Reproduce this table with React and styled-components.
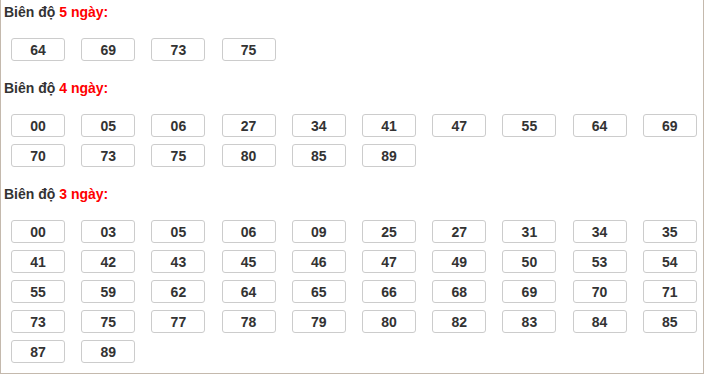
import styled, { createGlobalStyle } from 'styled-components';

const GlobalStyle = createGlobalStyle`
body {
  margin: 0;
  background: #fff;
  font-family: "Liberation Sans", Arial, sans-serif;
}
`

const Panel = styled.div`
width: 704px;
height: 374px;
box-sizing: border-box;
border: 1px solid #c4b9ad;
border-top: none;
background: #fff;
overflow: hidden;
`

const Section = styled.div`
padding-bottom: ${props => props.$gap}px;
`

const Title = styled.div`
height: 24px;
line-height: 24px;
padding-left: 3px;
font-size: 14px;
font-weight: bold;
color: #333;
margin-bottom: 14px;
`

const Red = styled.span`
color: #f00;
`

const Grid = styled.div`
display: grid;
grid-template-columns: repeat(10, 1fr);
row-gap: 7px;
`

const Cell = styled.div`
width: 54px;
height: 23px;
margin-left: 10px;
box-sizing: border-box;
border: 1px solid #ccc;
border-radius: 3px;
display: flex;
align-items: center;
justify-content: center;
font-size: 14px;
font-weight: bold;
color: #333;
`

const groups = [
    { days: 5, nums: ['64', '69', '73', '75'] },
    { days: 4, nums: ['00', '05', '06', '27', '34', '41', '47', '55', '64', '69', '70', '73', '75', '80', '85', '89'] },
    {
        days: 3, nums: ['00', '03', '05', '06', '09', '25', '27', '31', '34', '35', '41', '42', '43', '45', '46', '47', '49', '50', '53', '54',
            '55', '59', '62', '64', '65', '66', '68', '69', '70', '71', '73', '75', '77', '78', '79', '80', '82', '83', '84', '85', '87', '89']
    },
]

const App = () => {
    return (
        <>
            <GlobalStyle />
            <Panel>
                {groups.map((g) => (
                    <Section key={g.days} $gap={15}>
                        <Title>Biên độ <Red>{g.days} ngày:</Red></Title>
                        <Grid>
                            {g.nums.map((n, i) => <Cell key={i}>{n}</Cell>)}
                        </Grid>
                    </Section>
                ))}
            </Panel>
        </>
    )
}
export default App;
